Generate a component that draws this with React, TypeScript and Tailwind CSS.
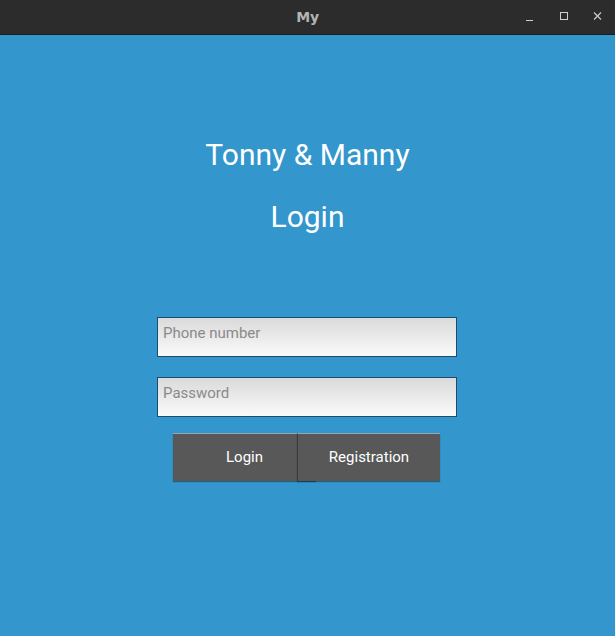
export default function App() {
  return (
    <div className="w-[615px] h-[636px] flex flex-col bg-[#3396cc] font-['Roboto',sans-serif] overflow-hidden">
      {/* title bar */}
      <div className="h-[35px] shrink-0 bg-[#2c2c2c] border-b border-[#1c1c1c] relative flex items-center justify-center">
        <span className="text-[#b4b4b4] text-[14px] font-bold font-['DejaVu_Sans',sans-serif] tracking-[-0.3px]">My</span>
        <div className="absolute right-0 top-0 h-full flex items-center">
          <svg width="12" height="12" viewBox="0 0 12 12" className="mr-[22px]">
            <path d="M2 9.5h7" stroke="#cfcfcf" strokeWidth="1" />
          </svg>
          <svg width="12" height="12" viewBox="0 0 12 12" className="mr-[22px]">
            <rect x="2.5" y="1.5" width="7" height="7" fill="none" stroke="#cfcfcf" strokeWidth="1" />
          </svg>
          <svg width="12" height="12" viewBox="0 0 12 12" className="mr-[11px]">
            <path d="M2 1.5l7 7M9 1.5l-7 7" stroke="#cfcfcf" strokeWidth="1.1" />
          </svg>
        </div>
      </div>

      <div className="flex flex-col items-center pt-[102px]">
        <h1 className="text-white text-[30px] leading-[35px]">Tonny &amp; Manny</h1>
        <h2 className="text-white text-[30px] leading-[35px] mt-[27px]">Login</h2>

        <div className="mt-[83px] flex flex-col gap-[20px] ml-[-1px]">
          <input
            placeholder="Phone number"
            className="w-[300px] h-[40px] border border-[#1d4d6c] bg-gradient-to-b from-[#dadada] to-[#fafafa] px-[5px] pt-[6px] pb-[14px] text-[15px] leading-[18px] text-[#333] placeholder:text-[#8a8a8a] outline-none"
          />
          <input
            placeholder="Password"
            type="password"
            className="w-[300px] h-[40px] border border-[#1d4d6c] bg-gradient-to-b from-[#dadada] to-[#fafafa] px-[5px] pt-[6px] pb-[14px] text-[15px] leading-[18px] text-[#333] placeholder:text-[#8a8a8a] outline-none"
          />
        </div>

        <div className="mt-[16px] flex ml-[-2px]">
          <button className="w-[143px] h-[48px] bg-[#585858] border-t border-[#9aa6ad] text-white text-[15px] shadow-[0_1px_1px_rgba(0,0,0,0.35)]">
            Login
          </button>
          <button className="relative w-[143px] h-[48px] ml-[-19px] bg-[#585858] border-t border-[#9aa6ad] border-l border-l-[#3c3c3c] text-white text-[15px] shadow-[0_1px_1px_rgba(0,0,0,0.35)]">
            Registration
          </button>
        </div>
      </div>
    </div>
  );
}
